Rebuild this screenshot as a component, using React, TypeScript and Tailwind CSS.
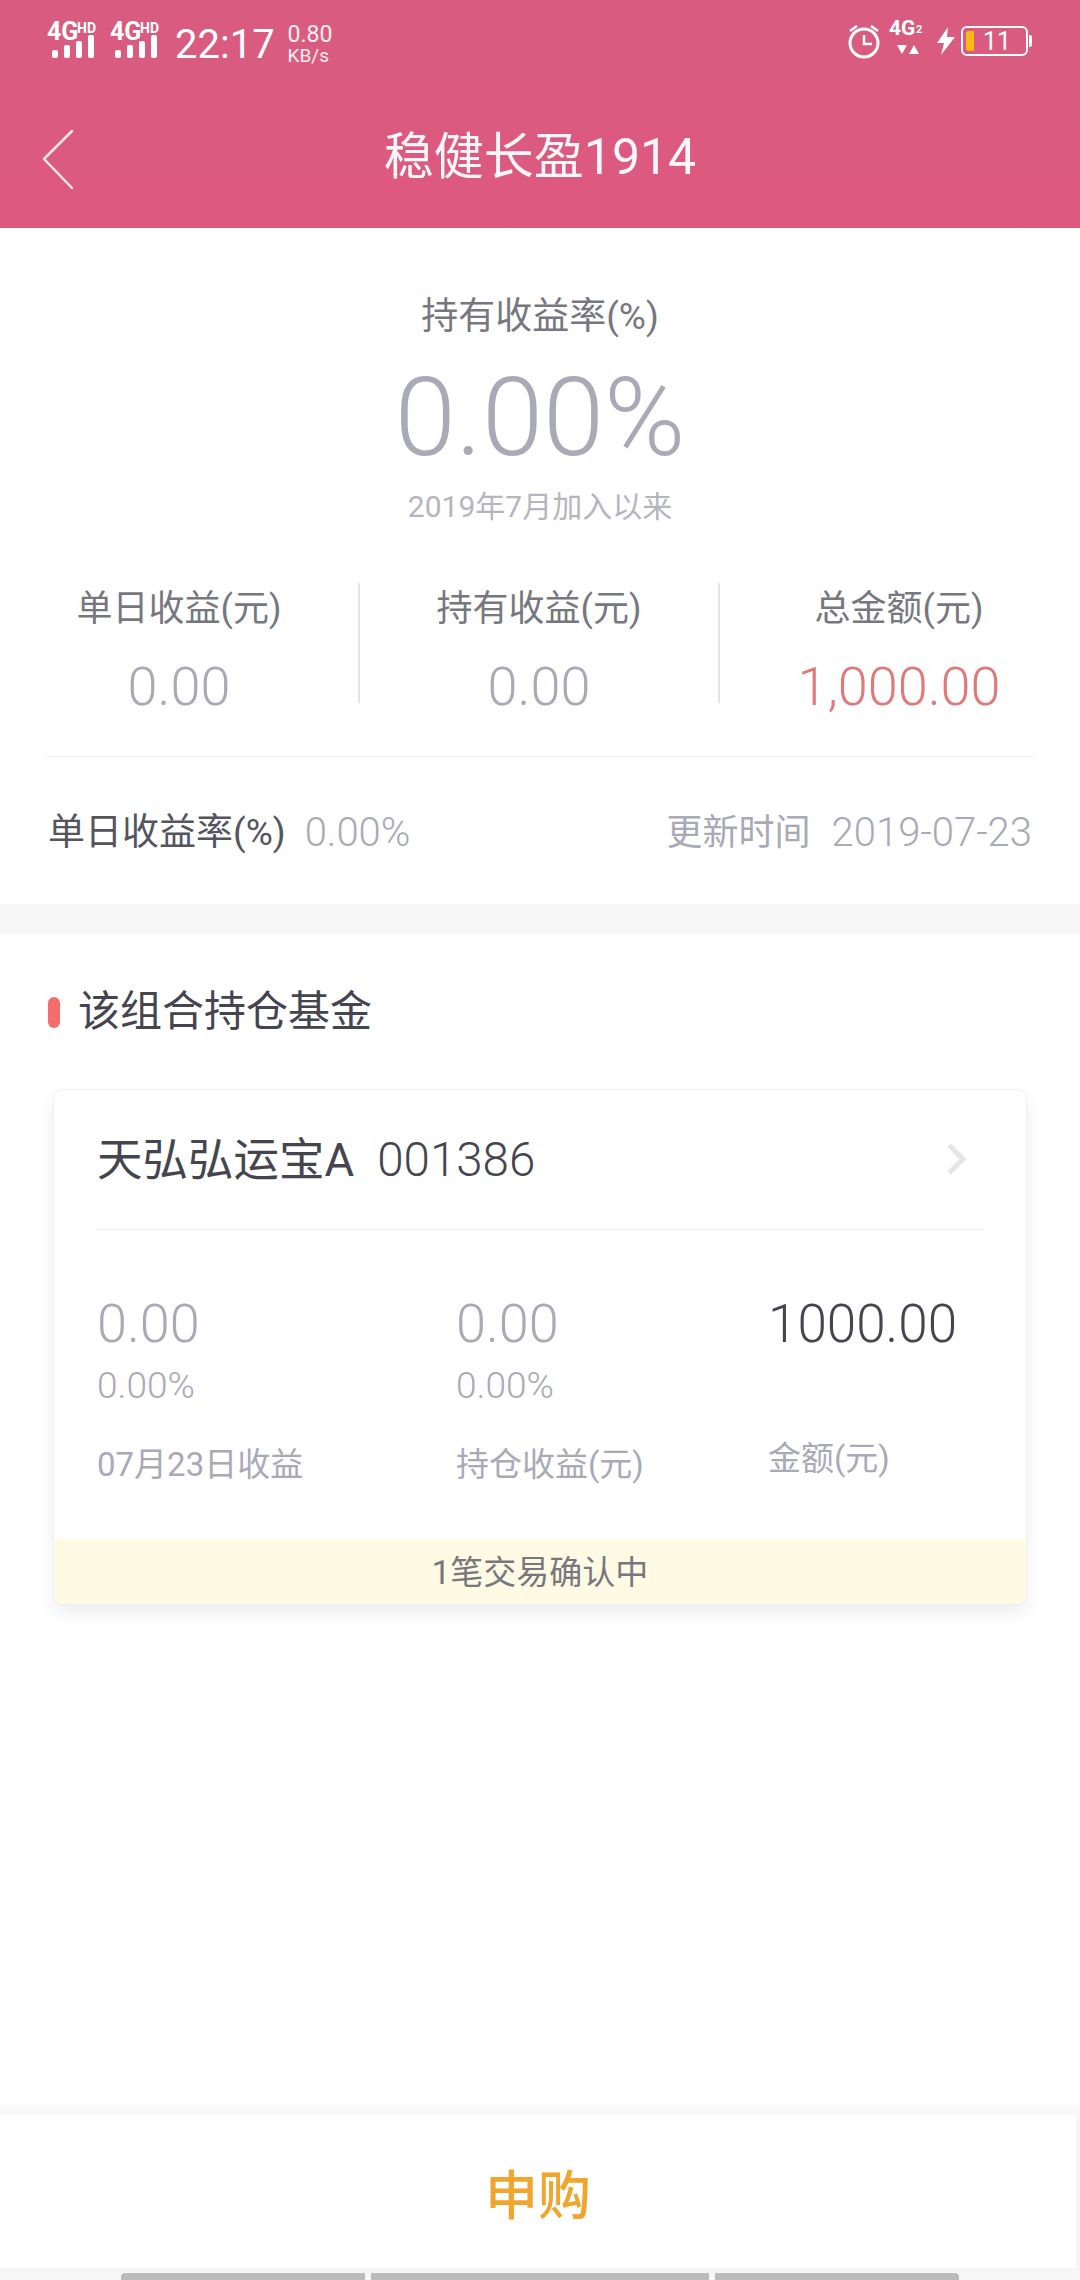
function SignalIcon() {
  return (
    <div className="relative h-[36px] w-[50px] text-white">
      <span className="absolute left-0 top-[-3px] text-[25px] leading-[24px] font-bold">4G</span>
      <span className="absolute left-[30px] top-[-2px] text-[14px] leading-[14px] font-bold">HD</span>
      <svg className="absolute left-0 top-0" width="50" height="36" viewBox="0 0 50 36" fill="#fff">
        <rect x="5" y="27" width="6" height="8" rx="2" />
        <rect x="17" y="22" width="6" height="13" rx="2" />
        <rect x="29" y="18" width="6" height="17" rx="2" />
        <rect x="41" y="12" width="6" height="23" rx="2" />
      </svg>
    </div>
  );
}

function StatusBar() {
  return (
    <div className="flex h-[82px] items-center justify-between pl-[47px] pr-[52px] text-white">
      <div className="flex items-center">
        <div className="flex gap-[13px]">
          <SignalIcon />
          <SignalIcon />
        </div>
        <span className="ml-[15px] mt-[8px] text-[40px] leading-none">22:17</span>
        <div className="ml-[13px] mt-[6px] flex flex-col text-white/90">
          <span className="text-[23px] leading-[22px]">0.80</span>
          <span className="text-[19px] leading-[19px]">KB/s</span>
        </div>
      </div>
      <div className="flex items-center">
        <svg width="34" height="36" viewBox="0 0 34 36" fill="none" stroke="#fff" strokeWidth="3">
          <circle cx="17" cy="20" r="14" />
          <path d="M17 12v9h8" strokeWidth="2.5" />
          <path d="M3 8l7-5M31 8l-7-5" strokeWidth="2.5" />
        </svg>
        <div className="relative ml-[8px] h-[36px] w-[38px]">
          <span className="absolute left-0 top-[-7px] text-[21px] leading-[24px] font-bold">4G</span>
          <span className="absolute left-[27px] top-[1px] text-[11px] leading-[12px] font-bold">2</span>
          <svg className="absolute left-[8px] top-[22px]" width="22" height="10" viewBox="0 0 22 10" fill="#fff">
            <path d="M0 0h10l-5 9zM12 9h10l-5-9z" />
          </svg>
        </div>
        <svg className="ml-[9px]" width="20" height="30" viewBox="0 0 20 30" fill="#fff">
          <path d="M12 1L1 17h7l-3 12L19 11h-8z" />
        </svg>
        <div className="relative ml-[5px] flex h-[30px] w-[67px] items-center rounded-[6px] border-2 border-white">
          <div className="ml-[3px] h-[20px] w-[8px] rounded-l-[3px] bg-[#fdb813]" />
          <span className="ml-[9px] text-[25px] leading-none">11</span>
          <div className="absolute right-[-6px] top-[7px] h-[12px] w-[3px] rounded-r-[2px] bg-white" />
        </div>
      </div>
    </div>
  );
}

function Stat({ label, value, red }: { label: string; value: string; red?: boolean }) {
  return (
    <div className="flex flex-1 flex-col items-center pt-[3px]">
      <span className="text-[36px] leading-[46px] text-[#77777f]">{label}</span>
      <span className={`mt-[27px] text-[54px] leading-[56px] font-light ${red ? 'text-[#e07a7a]' : 'text-[#a9a9b8]'}`}>{value}</span>
    </div>
  );
}

function FundCol({ value, pct, label, dark, className }: { value: string; pct?: string; label: string; dark?: boolean; className: string }) {
  return (
    <div className={`flex flex-col ${className}`}>
      <span className={`leading-[56px] font-light ${dark ? 'text-[53px] text-[#45454f]' : 'text-[54px] text-[#a9a9b8]'}`}>{value}</span>
      {pct ? (
        <>
          <span className="mt-[14px] text-[37px] leading-[40px] font-light text-[#a9a9b8]">{pct}</span>
          <span className="mt-[39px] text-[33px] leading-[40px] text-[#a9a9b8]">{label}</span>
        </>
      ) : (
        <span className="mt-[87px] text-[33px] leading-[40px] text-[#a9a9b8]">{label}</span>
      )}
    </div>
  );
}

export default function App() {
  return (
    <div className="flex h-[2280px] w-[1080px] flex-col overflow-hidden bg-white font-['Roboto','Noto_Sans_CJK_SC',sans-serif]">
      <div className="h-[228px] bg-gradient-to-b from-[#d85c80] to-[#de5880]">
        <StatusBar />
        <div className="relative flex h-[146px] items-center justify-center pt-[4px]">
          <svg className="absolute left-[40px] top-[46px]" width="36" height="64" viewBox="0 0 36 64" fill="none" stroke="#fff" strokeWidth="2.5" strokeLinecap="round" strokeLinejoin="round" opacity="0.85">
            <path d="M32 3L4 31l28 29" />
          </svg>
          <span className="text-[50px] leading-none text-white/95">稳健长盈1914</span>
        </div>
      </div>

      <div className="flex flex-col items-center pt-[65px]">
        <span className="text-[37px] leading-[48px] text-[#77777f]">持有收益率(%)</span>
        <span className="mt-[22px] text-[110px] leading-[110px] font-light text-[#a9a9b8]">0.00%</span>
        <span className="mt-[13px] text-[30px] leading-[42px] text-[#b5b5c0]">2019年7月加入以来</span>
      </div>

      <div className="mt-[55px] flex pr-[2px]">
        <Stat label="单日收益(元)" value="0.00" />
        <div className="h-[120px] w-[2px] bg-[#e4e4e8]" />
        <Stat label="持有收益(元)" value="0.00" />
        <div className="h-[120px] w-[2px] bg-[#e4e4e8]" />
        <Stat label="总金额(元)" value="1,000.00" red />
      </div>

      <div className="mx-[46px] mt-[41px] h-[1px] bg-[#f1f1f3]" />

      <div className="flex h-[147px] items-center justify-between pl-[48px] pr-[48px] pt-[4px] text-[#a9a9b8]">
        <div className="flex items-center">
          <span className="text-[37px] text-[#55555f]">单日收益率(%)</span>
          <span className="ml-[19px] text-[40px] font-light">0.00%</span>
        </div>
        <div className="flex items-center">
          <span className="text-[36px]">更新时间</span>
          <span className="ml-[21px] text-[40px] font-light">2019-07-23</span>
        </div>
      </div>

      <div className="h-[30px] bg-[#f6f6f6]" />

      <div className="flex items-center pl-[48px] pt-[52px]">
        <div className="h-[31px] w-[12px] rounded-full bg-[#f56c6c]" />
        <span className="ml-[18px] text-[42px] leading-[52px] text-[#45454f]">该组合持仓基金</span>
      </div>

      <div className="mx-[53px] mt-[51px] flex h-[516px] flex-col overflow-hidden rounded-[10px] border border-[#f0f0f0] bg-white shadow-[0_8px_18px_rgba(0,0,0,0.07)]">
        <div className="mx-[43px] flex h-[140px] shrink-0 items-center justify-between border-b border-[#f0f0f2] pt-[2px]">
          <span className="leading-none text-[#45454f]">
            <span className="text-[45.5px]">天弘弘运宝A</span>
            <span className="ml-[23px] text-[47.5px] font-light">001386</span>
          </span>
          <svg className="mr-[15px] mb-[3px]" width="22" height="34" viewBox="0 0 22 34" fill="none" stroke="#e6e6e6" strokeWidth="5">
            <path d="M3 3l14 14L3 31" />
          </svg>
        </div>
        <div className="flex flex-1 pt-[66px]">
          <FundCol className="ml-[43px] w-[359px]" value="0.00" pct="0.00%" label="07月23日收益" />
          <FundCol className="w-[312px]" value="0.00" pct="0.00%" label="持仓收益(元)" />
          <FundCol className="" value="1000.00" label="金额(元)" dark />
        </div>
        <div className="flex h-[65px] shrink-0 items-center justify-center bg-[#fffae3] pt-[2px] text-[33px] text-[#77777f]">1笔交易确认中</div>
      </div>

      <div className="mt-auto h-[168px]">
        <div className="h-[15px] bg-gradient-to-b from-white to-[#f6f6f6]" />
        <div className="flex h-[153px] items-center justify-center border-r-4 border-[#f6f6f6] bg-white pt-[12px] text-[53px] font-medium text-[#f0a52c]">申购</div>
      </div>
      <div className="flex h-[12px] items-start gap-[6px] bg-[#f6f6f6] pl-[121px] pt-[5px]">
        <div className="h-[7px] w-[244px] rounded-tl-[4px] bg-[#bbbbbb]" />
        <div className="h-[7px] w-[338px] bg-[#bbbbbb]" />
        <div className="h-[7px] w-[244px] rounded-tr-[4px] bg-[#bbbbbb]" />
      </div>
    </div>
  );
}
